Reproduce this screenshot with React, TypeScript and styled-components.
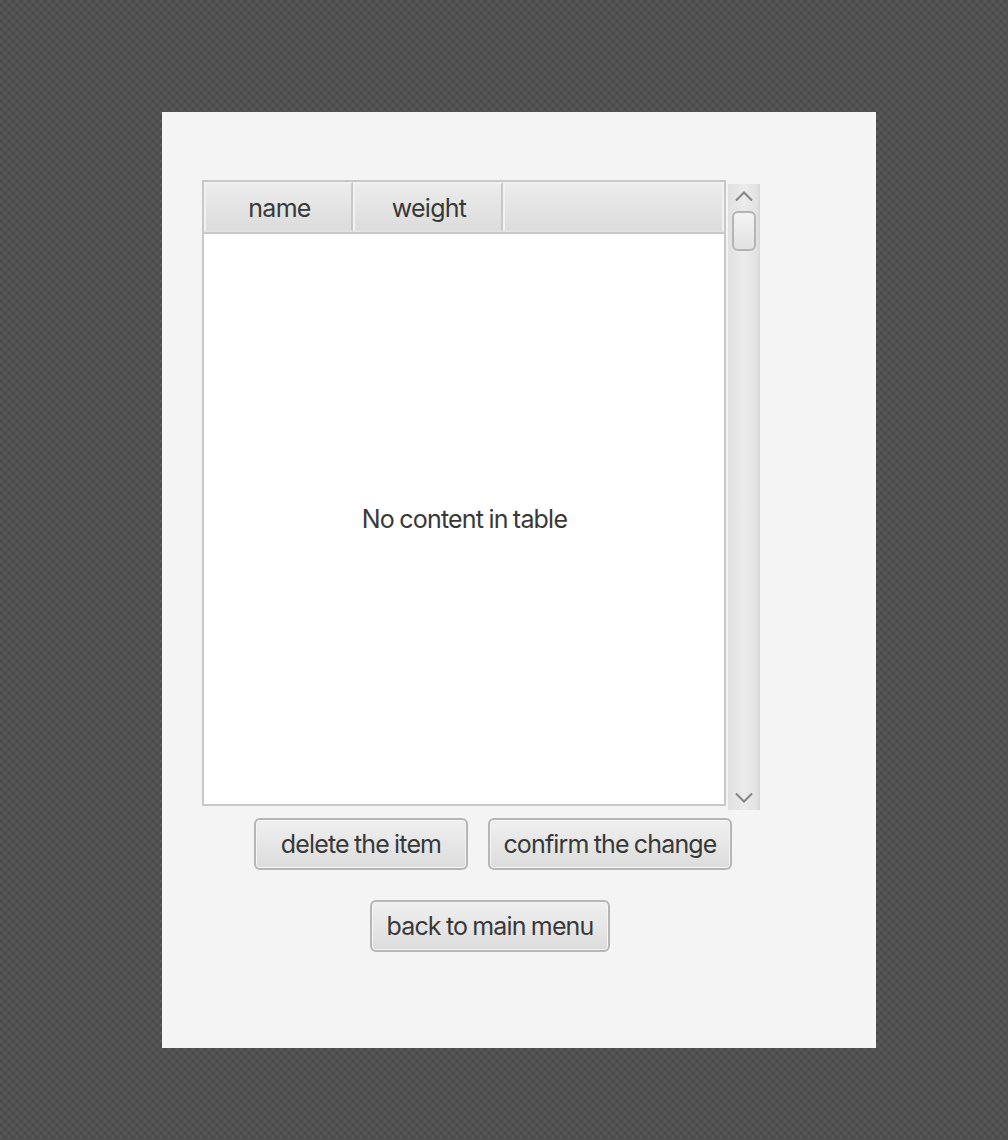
import React from "react"
import styled, { createGlobalStyle } from "styled-components"

const pattern = encodeURIComponent(
  `<svg xmlns="http://www.w3.org/2000/svg" width="8" height="8"><rect width="8" height="8" fill="#505050"/><path d="M0 0h2v2H0zM4 4h2v2H4z" fill="#5a5a5a"/><path d="M4 0h2v2H4zM0 4h2v2H0z" fill="#484848"/></svg>`
)

const GlobalStyle = createGlobalStyle`
  html, body {
    margin: 0;
    padding: 0;
    height: 100%;
  }
  body {
    background: #505050 url("data:image/svg+xml,${pattern}");
    font-family: Inter, "Liberation Sans", sans-serif;
    color: #383838;
  }
`

const Page = styled.div`
  width: 1008px;
  height: 1140px;
  padding: 112px 0 0 162px;
  box-sizing: border-box;
  overflow: hidden;
`

const Card = styled.div`
  width: 714px;
  height: 936px;
  box-sizing: border-box;
  background: #f4f4f4;
  padding: 68px 0 0 40px;
`

const TableRow = styled.div`
  display: flex;
  gap: 2px;
  align-items: flex-start;
`

const Table = styled.div`
  width: 524px;
  height: 626px;
  box-sizing: border-box;
  border: 2px solid #c8c8c8;
  background: #fff;
  display: flex;
  flex-direction: column;
`

const Header = styled.div`
  display: flex;
  height: 52px;
  flex-shrink: 0;
  border-bottom: 2px solid #c8c8c8;
  box-sizing: border-box;
`

const HeaderCell = styled.div<{ $width: number }>`
  width: ${({ $width }) => $width}px;
  flex-grow: ${({ $width }) => ($width > 200 ? 1 : 0)};
  box-sizing: border-box;
  display: flex;
  align-items: center;
  justify-content: center;
  padding: 2px 0 0 2px;
  font-size: 25px;
  letter-spacing: -0.75px;
  word-spacing: -1px;
  background: linear-gradient(#ececec, #dcdcdc);
  border: 2px solid #f1f1f1;
  border-right-color: #c8c8c8;
  border-bottom: 2px solid #e2e2e2;

  &:last-child {
    border-right-color: #f1f1f1;
  }
`

const Placeholder = styled.div`
  flex: 1;
  display: flex;
  align-items: center;
  justify-content: center;
  padding-left: 1px;
  font-size: 25px;
  letter-spacing: -0.8px;
  word-spacing: -1px;
`

const ScrollBar = styled.div`
  width: 32px;
  height: 626px;
  margin-top: 4px;
  box-sizing: border-box;
  background: linear-gradient(90deg, #e0e0e0, #ebebeb 50%, #e2e2e2 90%, #d6d6d6);
  display: flex;
  flex-direction: column;
  align-items: center;
`

const ArrowButton = styled.div<{ $down?: boolean }>`
  height: 26px;
  width: 100%;
  flex-shrink: 0;
  display: flex;
  align-items: ${({ $down }) => ($down ? "flex-end" : "flex-start")};
  justify-content: center;
  padding: ${({ $down }) => ($down ? "0 0 6px" : "6px 0 0")};
  box-sizing: border-box;
`

const Thumb = styled.div`
  width: 24px;
  height: 40px;
  margin-top: 1px;
  box-sizing: border-box;
  border: 2px solid #b4b4b4;
  border-radius: 6px;
  background: linear-gradient(#f3f3f3, #e2e2e2);
`

const Spacer = styled.div`
  flex: 1;
`

const ButtonRow = styled.div<{ $left: number; $top: number }>`
  display: flex;
  gap: 20px;
  margin: ${({ $top }) => $top}px 0 0 ${({ $left }) => $left}px;
`

const ActionButton = styled.button<{ $width: number }>`
  width: ${({ $width }) => $width}px;
  height: 52px;
  box-sizing: border-box;
  padding: 0;
  border: 2px solid #b6b6b6;
  border-radius: 6px;
  background: linear-gradient(#f0f0f0, #dcdcdc);
  box-shadow: inset 0 0 0 1px #f4f4f4;
  font-family: inherit;
  font-size: 25px;
  letter-spacing: -0.85px;
  word-spacing: -1px;
  color: #383838;
`

function Chevron({ up }: { up?: boolean }) {
  return (
    <svg width="20" height="12" viewBox="0 0 20 12">
      <path
        d={up ? "M2 10.5 10 2.5l8 8" : "M2 1.5l8 8 8-8"}
        fill="none"
        stroke="#858585"
        strokeWidth="2"
      />
    </svg>
  )
}

export default function App() {
  return (
    <>
      <GlobalStyle />
      <Page>
        <Card>
          <TableRow>
            <Table>
              <Header>
                <HeaderCell $width={149}>name</HeaderCell>
                <HeaderCell $width={150}>weight</HeaderCell>
                <HeaderCell $width={221} />
              </Header>
              <Placeholder>No content in table</Placeholder>
            </Table>
            <ScrollBar>
              <ArrowButton>
                <Chevron up />
              </ArrowButton>
              <Thumb />
              <Spacer />
              <ArrowButton $down>
                <Chevron />
              </ArrowButton>
            </ScrollBar>
          </TableRow>
          <ButtonRow $left={52} $top={8}>
            <ActionButton $width={214}>delete the item</ActionButton>
            <ActionButton $width={244}>confirm the change</ActionButton>
          </ButtonRow>
          <ButtonRow $left={168} $top={30}>
            <ActionButton $width={240}>back to main menu</ActionButton>
          </ButtonRow>
        </Card>
      </Page>
    </>
  )
}
